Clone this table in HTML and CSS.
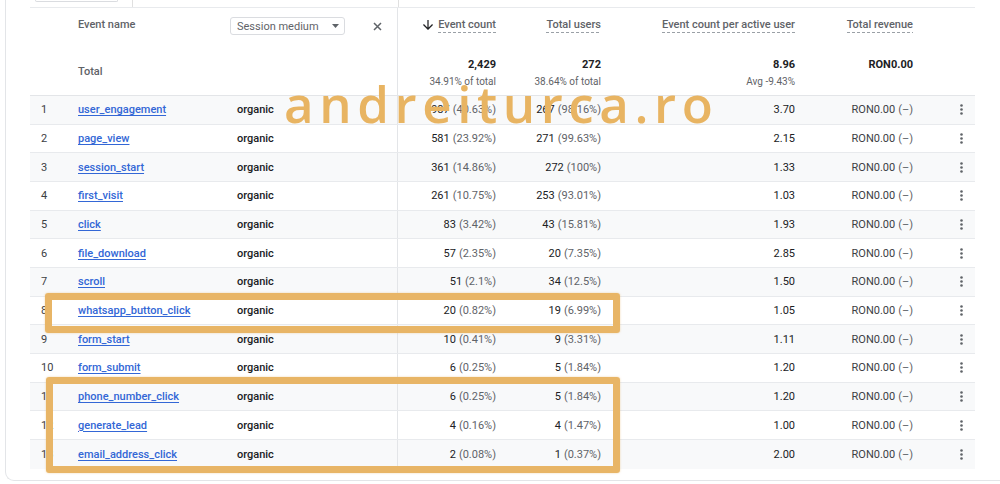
FILE: index.html
```
<!DOCTYPE html>
<html>
<head>
<meta charset="utf-8">
<link rel="stylesheet" href="styles.css">
</head>
<body>
<div class="card">
  <div class="topstrip">
    <div class="tab"></div>
    <div class="tick tick-a"></div>
    <div class="tick tick-b"></div>
  </div>
  <div class="table">
    <div class="row hrow1">
      <div class="c c1"></div>
      <div class="c c2"><span class="hlabel">Event name</span></div>
      <div class="c c3">
        <div class="dropdown"><span>Session medium</span><svg class="caret" width="7" height="4" viewBox="0 0 7 4"><path d="M0 0h7L3.5 4z" fill="#5f6368"/></svg></div>
        <svg class="close" width="9" height="9" viewBox="0 0 9 9"><path d="M1 1l7 7M8 1L1 8" stroke="#5f6368" stroke-width="1.5"/></svg>
      </div>
      <div class="c c4 num"><svg class="arrow" width="10" height="10" viewBox="4 4 16 16"><path d="M20 12l-1.41-1.41L13 16.17V4h-2v12.17l-5.58-5.59L4 12l8 8 8-8z" fill="#202124"/></svg><span class="mlabel">Event count</span></div>
      <div class="c c5 num"><span class="mlabel">Total users</span></div>
      <div class="c c6 num"><span class="mlabel">Event count per active user</span></div>
      <div class="c c7 num"><span class="mlabel">Total revenue</span></div>
      <div class="c c8"></div>
    </div>
    <div class="row hrow2">
      <div class="c c1"></div>
      <div class="c c2"><span class="hlabel">Total</span></div>
      <div class="c c3"></div>
      <div class="c c4 tot"><span class="tval">2,429</span><span class="tsub">34.91% of total</span></div>
      <div class="c c5 tot"><span class="tval">272</span><span class="tsub">38.64% of total</span></div>
      <div class="c c6 tot"><span class="tval">8.96</span><span class="tsub">Avg -9.43%</span></div>
      <div class="c c7 tot"><span class="tval">RON0.00</span></div>
      <div class="c c8"></div>
    </div>

    <div class="row drow">
      <div class="c c1">1</div><div class="c c2"><a class="ev">user_engagement</a></div><div class="c c3">organic</div>
      <div class="c c4 num">987<span class="pct">(40.63%)</span></div><div class="c c5 num">267<span class="pct">(98.16%)</span></div>
      <div class="c c6 num">3.70</div><div class="c c7 num rev">RON0.00<span class="pct">(–)</span></div>
      <div class="c c8"><svg class="kebab" width="3" height="11" viewBox="0 0 3 11"><circle cx="1.5" cy="1.5" r="1.3"/><circle cx="1.5" cy="5.5" r="1.3"/><circle cx="1.5" cy="9.5" r="1.3"/></svg></div>
    </div>
    <div class="row drow">
      <div class="c c1">2</div><div class="c c2"><a class="ev">page_view</a></div><div class="c c3">organic</div>
      <div class="c c4 num">581<span class="pct">(23.92%)</span></div><div class="c c5 num">271<span class="pct">(99.63%)</span></div>
      <div class="c c6 num">2.15</div><div class="c c7 num rev">RON0.00<span class="pct">(–)</span></div>
      <div class="c c8"><svg class="kebab" width="3" height="11" viewBox="0 0 3 11"><circle cx="1.5" cy="1.5" r="1.3"/><circle cx="1.5" cy="5.5" r="1.3"/><circle cx="1.5" cy="9.5" r="1.3"/></svg></div>
    </div>
    <div class="row drow">
      <div class="c c1">3</div><div class="c c2"><a class="ev">session_start</a></div><div class="c c3">organic</div>
      <div class="c c4 num">361<span class="pct">(14.86%)</span></div><div class="c c5 num">272<span class="pct">(100%)</span></div>
      <div class="c c6 num">1.33</div><div class="c c7 num rev">RON0.00<span class="pct">(–)</span></div>
      <div class="c c8"><svg class="kebab" width="3" height="11" viewBox="0 0 3 11"><circle cx="1.5" cy="1.5" r="1.3"/><circle cx="1.5" cy="5.5" r="1.3"/><circle cx="1.5" cy="9.5" r="1.3"/></svg></div>
    </div>
    <div class="row drow">
      <div class="c c1">4</div><div class="c c2"><a class="ev">first_visit</a></div><div class="c c3">organic</div>
      <div class="c c4 num">261<span class="pct">(10.75%)</span></div><div class="c c5 num">253<span class="pct">(93.01%)</span></div>
      <div class="c c6 num">1.03</div><div class="c c7 num rev">RON0.00<span class="pct">(–)</span></div>
      <div class="c c8"><svg class="kebab" width="3" height="11" viewBox="0 0 3 11"><circle cx="1.5" cy="1.5" r="1.3"/><circle cx="1.5" cy="5.5" r="1.3"/><circle cx="1.5" cy="9.5" r="1.3"/></svg></div>
    </div>
    <div class="row drow">
      <div class="c c1">5</div><div class="c c2"><a class="ev">click</a></div><div class="c c3">organic</div>
      <div class="c c4 num">83<span class="pct">(3.42%)</span></div><div class="c c5 num">43<span class="pct">(15.81%)</span></div>
      <div class="c c6 num">1.93</div><div class="c c7 num rev">RON0.00<span class="pct">(–)</span></div>
      <div class="c c8"><svg class="kebab" width="3" height="11" viewBox="0 0 3 11"><circle cx="1.5" cy="1.5" r="1.3"/><circle cx="1.5" cy="5.5" r="1.3"/><circle cx="1.5" cy="9.5" r="1.3"/></svg></div>
    </div>
    <div class="row drow">
      <div class="c c1">6</div><div class="c c2"><a class="ev">file_download</a></div><div class="c c3">organic</div>
      <div class="c c4 num">57<span class="pct">(2.35%)</span></div><div class="c c5 num">20<span class="pct">(7.35%)</span></div>
      <div class="c c6 num">2.85</div><div class="c c7 num rev">RON0.00<span class="pct">(–)</span></div>
      <div class="c c8"><svg class="kebab" width="3" height="11" viewBox="0 0 3 11"><circle cx="1.5" cy="1.5" r="1.3"/><circle cx="1.5" cy="5.5" r="1.3"/><circle cx="1.5" cy="9.5" r="1.3"/></svg></div>
    </div>
    <div class="row drow">
      <div class="c c1">7</div><div class="c c2"><a class="ev">scroll</a></div><div class="c c3">organic</div>
      <div class="c c4 num">51<span class="pct">(2.1%)</span></div><div class="c c5 num">34<span class="pct">(12.5%)</span></div>
      <div class="c c6 num">1.50</div><div class="c c7 num rev">RON0.00<span class="pct">(–)</span></div>
      <div class="c c8"><svg class="kebab" width="3" height="11" viewBox="0 0 3 11"><circle cx="1.5" cy="1.5" r="1.3"/><circle cx="1.5" cy="5.5" r="1.3"/><circle cx="1.5" cy="9.5" r="1.3"/></svg></div>
    </div>
    <div class="row drow">
      <div class="c c1">8</div><div class="c c2"><a class="ev">whatsapp_button_click</a></div><div class="c c3">organic</div>
      <div class="c c4 num">20<span class="pct">(0.82%)</span></div><div class="c c5 num">19<span class="pct">(6.99%)</span></div>
      <div class="c c6 num">1.05</div><div class="c c7 num rev">RON0.00<span class="pct">(–)</span></div>
      <div class="c c8"><svg class="kebab" width="3" height="11" viewBox="0 0 3 11"><circle cx="1.5" cy="1.5" r="1.3"/><circle cx="1.5" cy="5.5" r="1.3"/><circle cx="1.5" cy="9.5" r="1.3"/></svg></div>
    </div>
    <div class="row drow">
      <div class="c c1">9</div><div class="c c2"><a class="ev">form_start</a></div><div class="c c3">organic</div>
      <div class="c c4 num">10<span class="pct">(0.41%)</span></div><div class="c c5 num">9<span class="pct">(3.31%)</span></div>
      <div class="c c6 num">1.11</div><div class="c c7 num rev">RON0.00<span class="pct">(–)</span></div>
      <div class="c c8"><svg class="kebab" width="3" height="11" viewBox="0 0 3 11"><circle cx="1.5" cy="1.5" r="1.3"/><circle cx="1.5" cy="5.5" r="1.3"/><circle cx="1.5" cy="9.5" r="1.3"/></svg></div>
    </div>
    <div class="row drow">
      <div class="c c1">10</div><div class="c c2"><a class="ev">form_submit</a></div><div class="c c3">organic</div>
      <div class="c c4 num">6<span class="pct">(0.25%)</span></div><div class="c c5 num">5<span class="pct">(1.84%)</span></div>
      <div class="c c6 num">1.20</div><div class="c c7 num rev">RON0.00<span class="pct">(–)</span></div>
      <div class="c c8"><svg class="kebab" width="3" height="11" viewBox="0 0 3 11"><circle cx="1.5" cy="1.5" r="1.3"/><circle cx="1.5" cy="5.5" r="1.3"/><circle cx="1.5" cy="9.5" r="1.3"/></svg></div>
    </div>
    <div class="row drow">
      <div class="c c1">11</div><div class="c c2"><a class="ev">phone_number_click</a></div><div class="c c3">organic</div>
      <div class="c c4 num">6<span class="pct">(0.25%)</span></div><div class="c c5 num">5<span class="pct">(1.84%)</span></div>
      <div class="c c6 num">1.20</div><div class="c c7 num rev">RON0.00<span class="pct">(–)</span></div>
      <div class="c c8"><svg class="kebab" width="3" height="11" viewBox="0 0 3 11"><circle cx="1.5" cy="1.5" r="1.3"/><circle cx="1.5" cy="5.5" r="1.3"/><circle cx="1.5" cy="9.5" r="1.3"/></svg></div>
    </div>
    <div class="row drow">
      <div class="c c1">12</div><div class="c c2"><a class="ev">generate_lead</a></div><div class="c c3">organic</div>
      <div class="c c4 num">4<span class="pct">(0.16%)</span></div><div class="c c5 num">4<span class="pct">(1.47%)</span></div>
      <div class="c c6 num">1.00</div><div class="c c7 num rev">RON0.00<span class="pct">(–)</span></div>
      <div class="c c8"><svg class="kebab" width="3" height="11" viewBox="0 0 3 11"><circle cx="1.5" cy="1.5" r="1.3"/><circle cx="1.5" cy="5.5" r="1.3"/><circle cx="1.5" cy="9.5" r="1.3"/></svg></div>
    </div>
    <div class="row drow last">
      <div class="c c1">13</div><div class="c c2"><a class="ev">email_address_click</a></div><div class="c c3">organic</div>
      <div class="c c4 num">2<span class="pct">(0.08%)</span></div><div class="c c5 num">1<span class="pct">(0.37%)</span></div>
      <div class="c c6 num">2.00</div><div class="c c7 num rev">RON0.00<span class="pct">(–)</span></div>
      <div class="c c8"><svg class="kebab" width="3" height="11" viewBox="0 0 3 11"><circle cx="1.5" cy="1.5" r="1.3"/><circle cx="1.5" cy="5.5" r="1.3"/><circle cx="1.5" cy="9.5" r="1.3"/></svg></div>
    </div>
  </div>
</div>

<div class="watermark">andreiturca.ro</div>
<div class="hl hl-one"></div>
<div class="hl hl-two"></div>
</body>
</html>
```

FILE: styles.css
```
* { box-sizing: border-box; }
html, body { margin: 0; padding: 0; }
body {
  background: #ffffff;
  font-family: Roboto, "Liberation Sans", sans-serif;
  font-size: 11px;
  color: #202124;
  width: 1000px;
  height: 484px;
  overflow: hidden;
}
.card {
  margin-left: 5px;
  width: 995px;
  height: 481px;
  border-left: 1px solid #e3e5e8;
  border-bottom: 1px solid #e3e5e8;
  border-bottom-left-radius: 9px;
  padding-left: 24px;
  background: #ffffff;
}
.topstrip {
  display: flex;
  height: 7px;
}
.tab {
  margin-left: 5px;
  width: 83px;
  height: 2px;
  border: 1px solid #dadce0;
  border-top: none;
  border-radius: 0 0 3px 3px;
}
.tick { width: 1px; height: 7px; background: #e0e0e0; }
.tick-a { margin-left: 14px; }
.tick-b { margin-left: 265px; }

.table {
  width: 945px;
  border-top: 1px solid #e8eaed;
}
.row {
  display: grid;
  grid-template-columns: 40px 160px 168px 108px 105px 194px 118px 52px;
}
.c { display: flex; min-width: 0; white-space: nowrap; }
.c3 { border-right: 1px solid #e3e5e8; }
.num { justify-content: flex-end; padding-right: 10px; }

.hrow1 { height: 38px; }
.hrow1 .c { align-items: flex-start; padding-top: 10px; }
.hrow1 .c3 { padding-top: 9px; }
.hlabel { color: #5f6368; font-weight: 500; line-height: 14px; }
.c2 { padding-left: 8px; }
.dropdown {
  width: 115px;
  height: 18px;
  border: 1px solid #dadce0;
  border-radius: 3px;
  display: flex;
  align-items: center;
  padding-left: 6px;
  color: #5f6368;
  font-size: 11px;
}
.caret { margin-left: 13px; }
.close { margin-left: 28px; margin-top: 5px; }
.arrow { margin-right: 5px; margin-top: 2px; }
.mlabel {
  color: #5f6368;
  font-weight: 500;
  line-height: 14px;
  padding-bottom: 1px;
  background-image: linear-gradient(to right, #9aa0a6 60%, transparent 60%);
  background-size: 5px 1px;
  background-repeat: repeat-x;
  background-position: left bottom;
}

.hrow2 { height: 50px; border-bottom: 1px solid #e3e5e8; }
.hrow2 .c2 { padding-top: 19px; }
.tot {
  flex-direction: column;
  align-items: flex-end;
  padding-right: 10px;
  padding-top: 12px;
}
.tval { font-weight: 700; line-height: 14px; color: #202124; }
.tsub { font-size: 10px; line-height: 13px; margin-top: 3px; color: #5f6368; }

.drow {
  height: 28.66px;
  border-bottom: 1px solid #e8eaed;
}
.drow:nth-child(odd) { background: #f8f9fa; }
.drow.last { border-bottom: none; }
.drow .c { align-items: center; }
.drow .c1 { padding-left: 11px; color: #3c4043; }
.ev {
  color: #3367d6;
  font-weight: 500;
  text-decoration: underline;
  text-underline-offset: 2px;
}
.drow .c3 { padding-left: 7px; font-weight: 500; color: #202124; }
.pct { color: #5f6368; margin-left: 3px; }
.rev { color: #3c4043; }
.c8 { justify-content: flex-end; align-items: center; padding-right: 12px; }
.kebab { fill: #5f6368; }

.watermark {
  position: absolute;
  left: 284px;
  top: 85px;
  font-family: "Open Sans", sans-serif;
  font-weight: 600;
  font-size: 51px;
  line-height: 36px;
  letter-spacing: 5.6px;
  color: #e8b462;
  white-space: nowrap;
}
.hl {
  position: absolute;
  border: 7px solid #e8b566;
  border-radius: 3px;
  box-shadow: 0 0 2px rgba(232, 181, 102, 0.6);
}
.hl-one { left: 45px; top: 293px; width: 575px; height: 40px; }
.hl-two { left: 46px; top: 377px; width: 574px; height: 96px; }
```
